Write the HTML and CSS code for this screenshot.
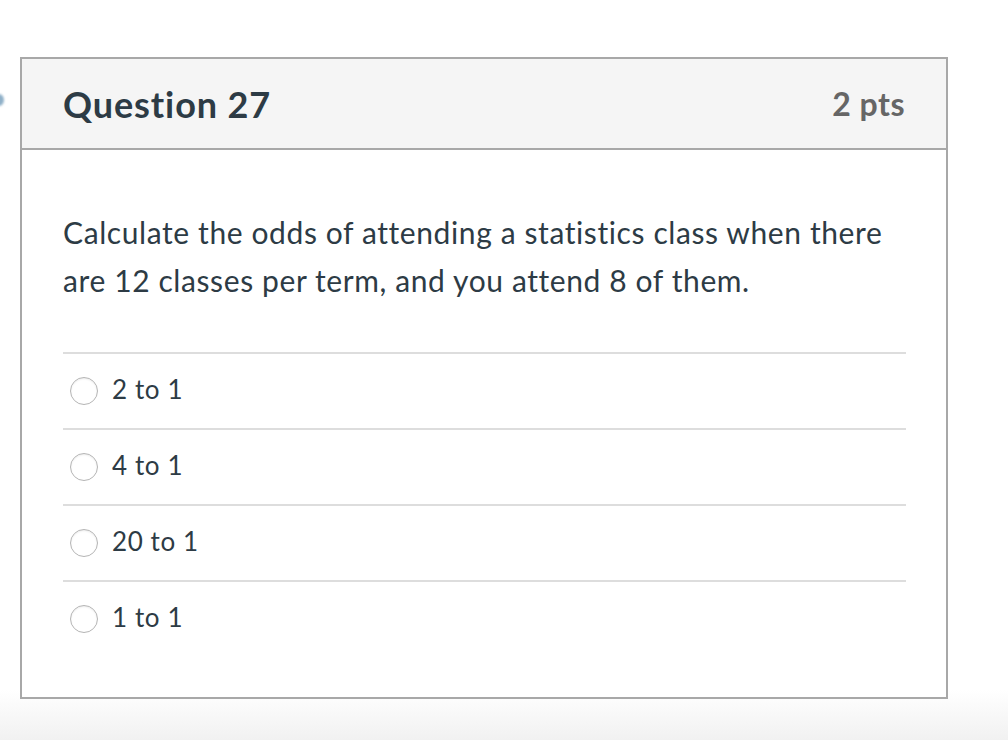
FILE: index.html
```html
<!DOCTYPE html>
<html>
<head>
<meta charset="utf-8">
<link rel="stylesheet" href="styles.css">
</head>
<body>
<div class="page">
  <span class="nav-dot"></span>
  <div class="question">
    <div class="q-header">
      <h2 class="q-title">Question 27</h2>
      <span class="q-points">2 pts</span>
    </div>
    <div class="q-body">
      <p class="q-text">Calculate the odds of attending a statistics class when there are 12 classes per term, and you attend 8 of them.</p>
      <ul class="answers">
        <li class="answer"><span class="radio"></span><span class="answer-label">2 to 1</span></li>
        <li class="answer"><span class="radio"></span><span class="answer-label">4 to 1</span></li>
        <li class="answer"><span class="radio"></span><span class="answer-label">20 to 1</span></li>
        <li class="answer"><span class="radio"></span><span class="answer-label">1 to 1</span></li>
      </ul>
    </div>
  </div>
</div>
</body>
</html>
```
FILE: styles.css
```css
html, body {
  margin: 0;
  padding: 0;
}
body {
  width: 1008px;
  height: 740px;
  overflow: hidden;
  background: linear-gradient(to bottom, #ffffff 0px, #ffffff 690px, #f1f1f1 740px);
  font-family: Lato, "Open Sans", sans-serif;
  color: #2d3b45;
}
.page {
  position: relative;
  padding: 57px 0 0 20px;
}
.nav-dot {
  position: absolute;
  left: -6px;
  top: 94px;
  width: 10px;
  height: 12px;
  border-radius: 50%;
  background: #8fb0c8;
  filter: blur(1px);
}
.question {
  width: 924px;
  border: 2px solid #a8a8a8;
  background: #ffffff;
}
.q-header {
  height: 89px;
  background: #f5f5f5;
  border-bottom: 2px solid #a8a8a8;
  display: flex;
  align-items: center;
  justify-content: space-between;
  padding: 0 41px 0 41px;
}
.q-title {
  margin: 0;
  font-size: 36px;
  font-weight: 700;
  color: #2d3b45;
  letter-spacing: 0.9px;
}
.q-points {
  font-size: 32px;
  font-weight: 700;
  color: #666666;
  letter-spacing: 0.5px;
}
.q-body {
  padding: 58px 40px 41px 41px;
}
.q-text {
  margin: 0 0 48px;
  font-size: 30px;
  line-height: 48px;
  letter-spacing: 0.6px;
  color: #2d3b45;
}
.answers {
  list-style: none;
  margin: 0;
  padding: 0;
}
.answer {
  border-top: 2px solid #dddddd;
  height: 74px;
  display: flex;
  align-items: center;
  gap: 14px;
  padding-left: 7px;
}
.radio {
  width: 26px;
  height: 26px;
  border-radius: 50%;
  border: 1px solid #b5b5b5;
  background: #ffffff;
  box-shadow: inset 0 1px 2px rgba(0,0,0,0.08);
  flex: none;
}
.answer-label {
  font-size: 26px;
  letter-spacing: 0.6px;
  color: #2d3b45;
  padding-bottom: 5px;
}
```
